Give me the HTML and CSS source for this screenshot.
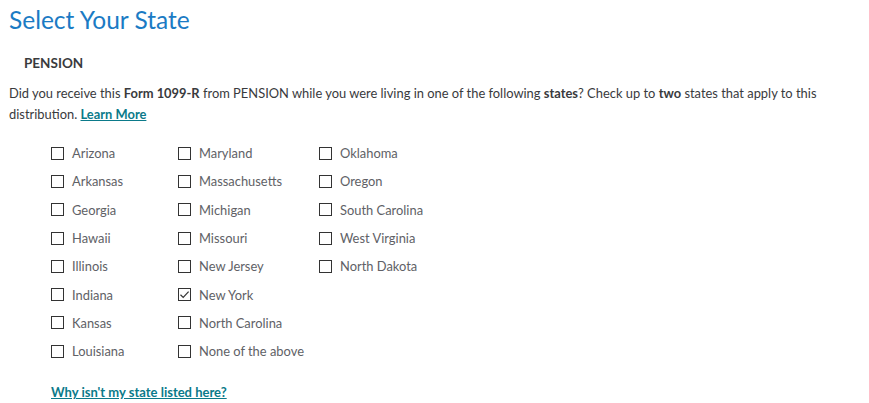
FILE: index.html
```html
<!DOCTYPE html>
<html>
<head>
<meta charset="utf-8">
<link rel="stylesheet" href="styles.css">
</head>
<body>
<div class="page">
  <h1 class="title">Select Your State</h1>
  <h2 class="payer">PENSION</h2>
  <p class="question">Did you receive this <b>Form 1099-R</b> from PENSION while you were living in one of the following <b>states</b>? Check up to <b>two</b> states that apply to this distribution. <a class="link" href="#">Learn More</a></p>
  <div class="grid">
    <div class="col col1">
      <label class="opt"><span class="box"></span><span class="lbl">Arizona</span></label>
      <label class="opt"><span class="box"></span><span class="lbl">Arkansas</span></label>
      <label class="opt"><span class="box"></span><span class="lbl">Georgia</span></label>
      <label class="opt"><span class="box"></span><span class="lbl">Hawaii</span></label>
      <label class="opt"><span class="box"></span><span class="lbl">Illinois</span></label>
      <label class="opt"><span class="box"></span><span class="lbl">Indiana</span></label>
      <label class="opt"><span class="box"></span><span class="lbl">Kansas</span></label>
      <label class="opt"><span class="box"></span><span class="lbl">Louisiana</span></label>
    </div>
    <div class="col col2">
      <label class="opt"><span class="box"></span><span class="lbl">Maryland</span></label>
      <label class="opt"><span class="box"></span><span class="lbl">Massachusetts</span></label>
      <label class="opt"><span class="box"></span><span class="lbl">Michigan</span></label>
      <label class="opt"><span class="box"></span><span class="lbl">Missouri</span></label>
      <label class="opt"><span class="box"></span><span class="lbl">New Jersey</span></label>
      <label class="opt"><span class="box checked"><svg viewBox="0 0 13 13" width="13" height="13"><path d="M2.5 6.8 L5.2 9.4 L10.6 3.6" fill="none" stroke="#333" stroke-width="1.2"/></svg></span><span class="lbl">New York</span></label>
      <label class="opt"><span class="box"></span><span class="lbl">North Carolina</span></label>
      <label class="opt"><span class="box"></span><span class="lbl">None of the above</span></label>
    </div>
    <div class="col col3">
      <label class="opt"><span class="box"></span><span class="lbl">Oklahoma</span></label>
      <label class="opt"><span class="box"></span><span class="lbl">Oregon</span></label>
      <label class="opt"><span class="box"></span><span class="lbl">South Carolina</span></label>
      <label class="opt"><span class="box"></span><span class="lbl">West Virginia</span></label>
      <label class="opt"><span class="box"></span><span class="lbl">North Dakota</span></label>
    </div>
  </div>
  <a class="link why" href="#">Why isn't my state listed here?</a>
</div>
</body>
</html>
```
FILE: styles.css
```css
html, body {
  margin: 0;
  padding: 0;
  background: #ffffff;
}
.page {
  padding: 4px 9px 0 9px;
  font-family: Lato, "Open Sans", sans-serif;
  color: #393a3d;
}
.title {
  margin: 0;
  font-size: 24.5px;
  font-weight: 400;
  color: #1b7bc4;
  line-height: 32px;
}
.payer {
  margin: 18px 0 0 15px;
  font-size: 13.5px;
  font-weight: 700;
  color: #393a3d;
  line-height: 18px;
}
.question {
  margin: 11px 0 0 0;
  font-size: 12.9px;
  line-height: 21px;
  color: #393a3d;
}
.question b {
  font-weight: 700;
}
.link {
  color: #0b7a8a;
  font-weight: 700;
  text-decoration: underline;
}
.grid {
  display: flex;
  margin: 14px 0 0 42px;
}
.col {
  display: flex;
  flex-direction: column;
}
.col1 { width: 127px; }
.col2 { width: 141px; }
.opt {
  display: flex;
  align-items: center;
  height: 28.3px;
  font-size: 12.9px;
  color: #606166;
}
.box {
  width: 11px;
  height: 11px;
  border: 1px solid #333;
  margin-right: 8px;
  flex: none;
  position: relative;
}
.box svg {
  position: absolute;
  left: -1px;
  top: -1px;
}
.why {
  display: inline-block;
  margin: 18px 0 0 42px;
  font-size: 13px;
  line-height: 18px;
}
```
